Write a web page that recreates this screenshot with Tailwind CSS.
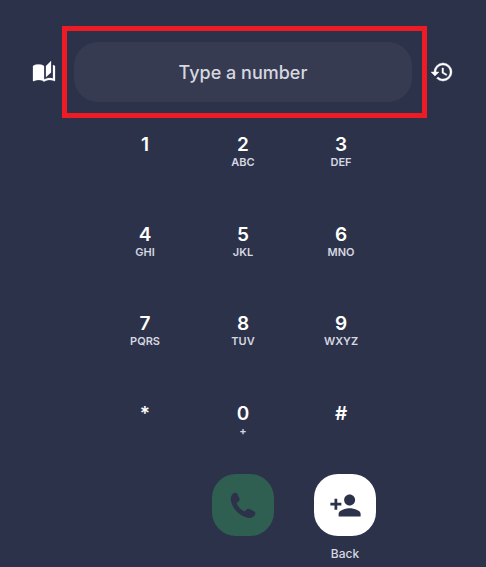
<!doctype html>
<html lang="en">
    <head>
        <meta charset="UTF-8" />
        <meta name="viewport" content="width=device-width, initial-scale=1.0" />
        <title>Dial pad</title>
        <script src="https://cdn.jsdelivr.net/npm/@tailwindcss/browser@4"></script>
    </head>
    <body class="bg-[#2d324b] font-['Inter',sans-serif] h-[567px] w-[486px] overflow-hidden">
        <div class="flex items-center pt-[26px] pl-[32px]">
            <svg class="w-6 h-6 text-white mr-[6px]" viewBox="0 0 24 24" fill="currentColor" stroke="currentColor" stroke-width="0.25">
                <path d="M19 1l-5 5v11l5-4.5V1zM1 6v14.65c0 .25.25.5.5.5.1 0 .15-.05.25-.05C3.1 20.45 5.05 20 6.5 20c1.95 0 4.05.4 5.5 1.5V6c-1.45-1.1-3.55-1.5-5.5-1.5S2.45 4.9 1 6zm22 13.5V6c-.6-.45-1.25-.75-2-1v13.5c-1.1-.35-2.3-.5-3.5-.5-1.7 0-4.15.65-5.5 1.5v2c1.35-.85 3.8-1.5 5.5-1.5 1.65 0 3.35.3 4.75 1.05.1.05.15.05.25.05.25 0 .5-.25.5-.5v-1.1z" />
            </svg>
            <div class="w-[365px] h-[92px] border-[5px] border-[#ed1c24] pl-[7px] pt-[11px]">
                <div class="w-[338px] h-[60px] rounded-[24px] bg-[#373b51] flex items-center justify-center pt-[2px] text-lg font-medium text-[#d5d8e0]">Type a number</div>
            </div>
            <svg class="w-6 h-6 text-white ml-[3px]" viewBox="0 0 24 24" fill="currentColor" stroke="currentColor" stroke-width="0.4">
                <path d="M13 3a9 9 0 0 0-9 9H1l3.89 3.89.07.14L9 12H6c0-3.87 3.13-7 7-7s7 3.13 7 7-3.13 7-7 7c-1.93 0-3.68-.79-4.94-2.06l-1.42 1.42A8.954 8.954 0 0 0 13 21a9 9 0 0 0 0-18zm-1 5v5l4.28 2.54.72-1.21-3.5-2.08V8H12z" />
            </svg>
        </div>

        <div class="grid grid-cols-[98px_98px_98px] auto-rows-[89.5px] ml-[96px] mt-[16px]">
            <div class="flex flex-col items-center"><span class="text-[19px] leading-[22px] font-semibold text-white">1</span></div>
            <div class="flex flex-col items-center"><span class="text-[19px] leading-[22px] font-semibold text-white">2</span><span class="text-[11px] leading-[13px] font-semibold text-[#d5d8e0]">ABC</span></div>
            <div class="flex flex-col items-center"><span class="text-[19px] leading-[22px] font-semibold text-white">3</span><span class="text-[11px] leading-[13px] font-semibold text-[#d5d8e0]">DEF</span></div>
            <div class="flex flex-col items-center"><span class="text-[19px] leading-[22px] font-semibold text-white">4</span><span class="text-[11px] leading-[13px] font-semibold text-[#d5d8e0]">GHI</span></div>
            <div class="flex flex-col items-center"><span class="text-[19px] leading-[22px] font-semibold text-white">5</span><span class="text-[11px] leading-[13px] font-semibold text-[#d5d8e0]">JKL</span></div>
            <div class="flex flex-col items-center"><span class="text-[19px] leading-[22px] font-semibold text-white">6</span><span class="text-[11px] leading-[13px] font-semibold text-[#d5d8e0]">MNO</span></div>
            <div class="flex flex-col items-center"><span class="text-[19px] leading-[22px] font-semibold text-white">7</span><span class="text-[11px] leading-[13px] font-semibold text-[#d5d8e0]">PQRS</span></div>
            <div class="flex flex-col items-center"><span class="text-[19px] leading-[22px] font-semibold text-white">8</span><span class="text-[11px] leading-[13px] font-semibold text-[#d5d8e0]">TUV</span></div>
            <div class="flex flex-col items-center"><span class="text-[19px] leading-[22px] font-semibold text-white">9</span><span class="text-[11px] leading-[13px] font-semibold text-[#d5d8e0]">WXYZ</span></div>
            <div class="flex flex-col items-center"><span class="text-[19px] leading-[22px] font-semibold text-white">*</span></div>
            <div class="flex flex-col items-center"><span class="text-[19px] leading-[22px] font-semibold text-white">0</span><span class="text-[11px] leading-[13px] font-semibold text-[#d5d8e0]">+</span></div>
            <div class="flex flex-col items-center"><span class="text-[19px] leading-[22px] font-semibold text-white">#</span></div>
        </div>

        <div class="flex ml-[212px] -mt-[18px] gap-[40px]">
            <div class="w-[62px] h-[62px] rounded-[24px] bg-[#2f5f50] flex items-center justify-center">
                <svg class="w-9 h-9 text-[#2d324b]" viewBox="0 0 36 36" fill="currentColor">
                    <path d="M8.6 6.3C10.2 5.3 12 5.8 12.7 7.4L14.5 11.4C15 12.7 14.6 13.7 13.6 14.4L11.6 15.9C12.8 19.4 15.8 22.8 19.6 24.6L21.3 22.7C22.2 21.7 23.4 21.5 24.6 22.1L28.9 24.2C30.4 25 30.8 26.6 29.9 28C28.7 30 26 31.4 23.4 30.9C14.2 29.2 7 21.2 5.8 13C5.4 10.4 6.6 7.7 8.6 6.3Z" />
                </svg>
            </div>
            <div class="flex flex-col items-center">
                <div class="w-[62px] h-[62px] rounded-[24px] bg-white flex items-center justify-center">
                    <svg class="w-[33px] h-[33px] text-[#2d324b]" viewBox="0 0 24 24" fill="currentColor">
                        <path d="M15 12c2.21 0 4-1.79 4-4s-1.79-4-4-4-4 1.79-4 4 1.79 4 4 4zm-9-2V7H4v3H1v2h3v3h2v-3h3v-2H6zm9 4c-2.67 0-8 1.34-8 4v2h16v-2c0-2.66-5.33-4-8-4z" />
                    </svg>
                </div>
                <span class="mt-[10px] text-xs leading-[16px] font-medium text-[#d5d8e0]">Back</span>
            </div>
        </div>
    </body>
</html>
